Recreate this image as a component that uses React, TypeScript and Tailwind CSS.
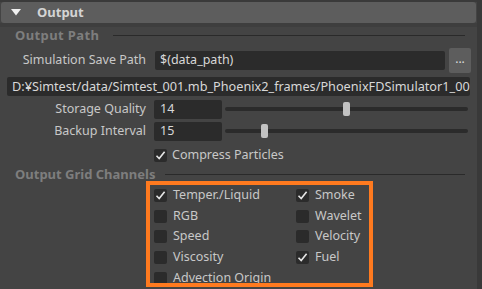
import { ReactNode } from 'react'

const font = { fontFamily: '"Noto Sans", "Noto Sans CJK JP", sans-serif' }

function Check({ on }: { on?: boolean }) {
    return (
        <div className="w-[13px] h-[13px] bg-[#2b2b2b] rounded-[2px] flex items-center justify-center shrink-0">
            {on && (
                <svg width="11" height="11" viewBox="0 0 11 11">
                    <path d="M1.5 5.8 L4.2 8.6 L9.6 1.8" fill="none" stroke="#e6e6e6" strokeWidth="1.6" />
                </svg>
            )}
        </div>
    )
}

function CheckRow({ label, on }: { label: string; on?: boolean }) {
    return (
        <div className="h-[20.7px] shrink-0 flex items-center gap-[6px]">
            <Check on={on} />
            <span className="text-[12.5px] text-[#c8c8c8] leading-none whitespace-nowrap">{label}</span>
        </div>
    )
}

function SectionTitle({ children, lineFrom, h }: { children: ReactNode; lineFrom: string; h: string }) {
    return (
        <div className={`flex items-center ${h} pl-[15px] pr-[12px]`}>
            <span className="text-[13px] font-bold text-[#7e7e7e] leading-none whitespace-nowrap">{children}</span>
            <div className={`flex-1 ${lineFrom} border-t border-[#2a2a2a] border-b-[#5a5a5a]`} />
        </div>
    )
}

function SliderRow({ label, value, pos }: { label: string; value: string; pos: number }) {
    return (
        <div className="flex items-center h-[22px]">
            <span className="w-[146px] text-right text-[12.5px] text-[#c8c8c8] leading-none">{label}</span>
            <div className="ml-[8px] w-[68px] h-[19px] bg-[#2b2b2b] rounded-[2px] flex items-center pl-[6px] text-[12.5px] text-[#d8d8d8]">
                {value}
            </div>
            <div className="relative ml-[3px] w-[243px] h-[14px] flex items-center">
                <div className="w-full h-[4px] bg-[#2b2b2b] rounded-full" />
                <div className="absolute top-0 w-[7px] h-[14px] bg-[#c2c2c2] rounded-[2px]" style={{ left: pos }} />
            </div>
        </div>
    )
}

export default function App() {
    return (
        <div className="w-[482px] h-[289px] bg-[#444444] overflow-hidden flex" style={font}>
            <div className="flex-1 flex flex-col">
                {/* header */}
                <div className="h-[2px] bg-[#3a3a3a]" />
                <div className="mx-[1px] h-[21px] bg-[#5d5d5d] rounded-[3px] flex items-center">
                    <svg width="10" height="7" viewBox="0 0 10 7" className="ml-[10px]">
                        <path d="M0 0 H10 L5 6.5 Z" fill="#f0f0f0" />
                    </svg>
                    <span className="ml-[16px] text-[13px] font-bold text-[#d4d4d4] leading-none">Output</span>
                </div>
                <div className="h-[4px] bg-[#3e3e3e]" />

                <SectionTitle lineFrom="ml-[14px]" h="h-[16px]">
                    <span className="tracking-[0.4px]">Output Path</span>
                </SectionTitle>

                <div className="flex items-center h-[26px] mt-[4px]">
                    <span className="w-[146px] text-right text-[12.5px] text-[#c8c8c8] leading-none">Simulation Save Path</span>
                    <div className="ml-[9px] w-[290px] h-[19px] bg-[#2b2b2b] rounded-[2px] flex items-center pl-[5px] text-[12.5px] text-[#d8d8d8]">
                        $(data_path)
                    </div>
                    <div className="ml-[4px] w-[22px] h-[25px] bg-[#5d5d5d] rounded-[2px] flex items-center justify-center text-[12px] text-[#dcdcdc] leading-none pb-[2px]">
                        ...
                    </div>
                </div>

                <div className="mt-[4px] ml-[7px] w-[463px] h-[19px] bg-[#2b2b2b] rounded-[2px] flex items-center pl-[5px] text-[12.7px] text-[#d8d8d8] overflow-hidden whitespace-nowrap">
                    D:¥Simtest/data/Simtest_001.mb_Phoenix2_frames/PhoenixFDSimulator1_0000
                </div>

                <div className="mt-[2px] flex flex-col">
                    <SliderRow label="Storage Quality" value="14" pos={118} />
                    <SliderRow label="Backup Interval" value="15" pos={36} />
                </div>

                <div className="mt-[2px] flex items-center h-[22px] pl-[154px] gap-[5px]">
                    <Check on />
                    <span className="text-[12.5px] text-[#c8c8c8] leading-none">Compress Particles</span>
                </div>

                <div className="mt-[1px]">
                    <SectionTitle lineFrom="ml-[10px]" h="h-[14px]">Output Grid Channels</SectionTitle>
                </div>

                <div className="ml-[146px] w-[227px] h-[106px] shrink-0 border-[4px] border-[#ff7a1f] pl-[4px] flex overflow-hidden">
                    <div className="w-[142px] flex flex-col">
                        <CheckRow label="Temper./Liquid" on />
                        <CheckRow label="RGB" />
                        <CheckRow label="Speed" />
                        <CheckRow label="Viscosity" />
                        <CheckRow label="Advection Origin" />
                    </div>
                    <div className="flex flex-col">
                        <CheckRow label="Smoke" on />
                        <CheckRow label="Wavelet" />
                        <CheckRow label="Velocity" />
                        <CheckRow label="Fuel" on />
                    </div>
                </div>
            </div>
            <div className="w-[5px] bg-[#393939]" />
        </div>
    )
}
